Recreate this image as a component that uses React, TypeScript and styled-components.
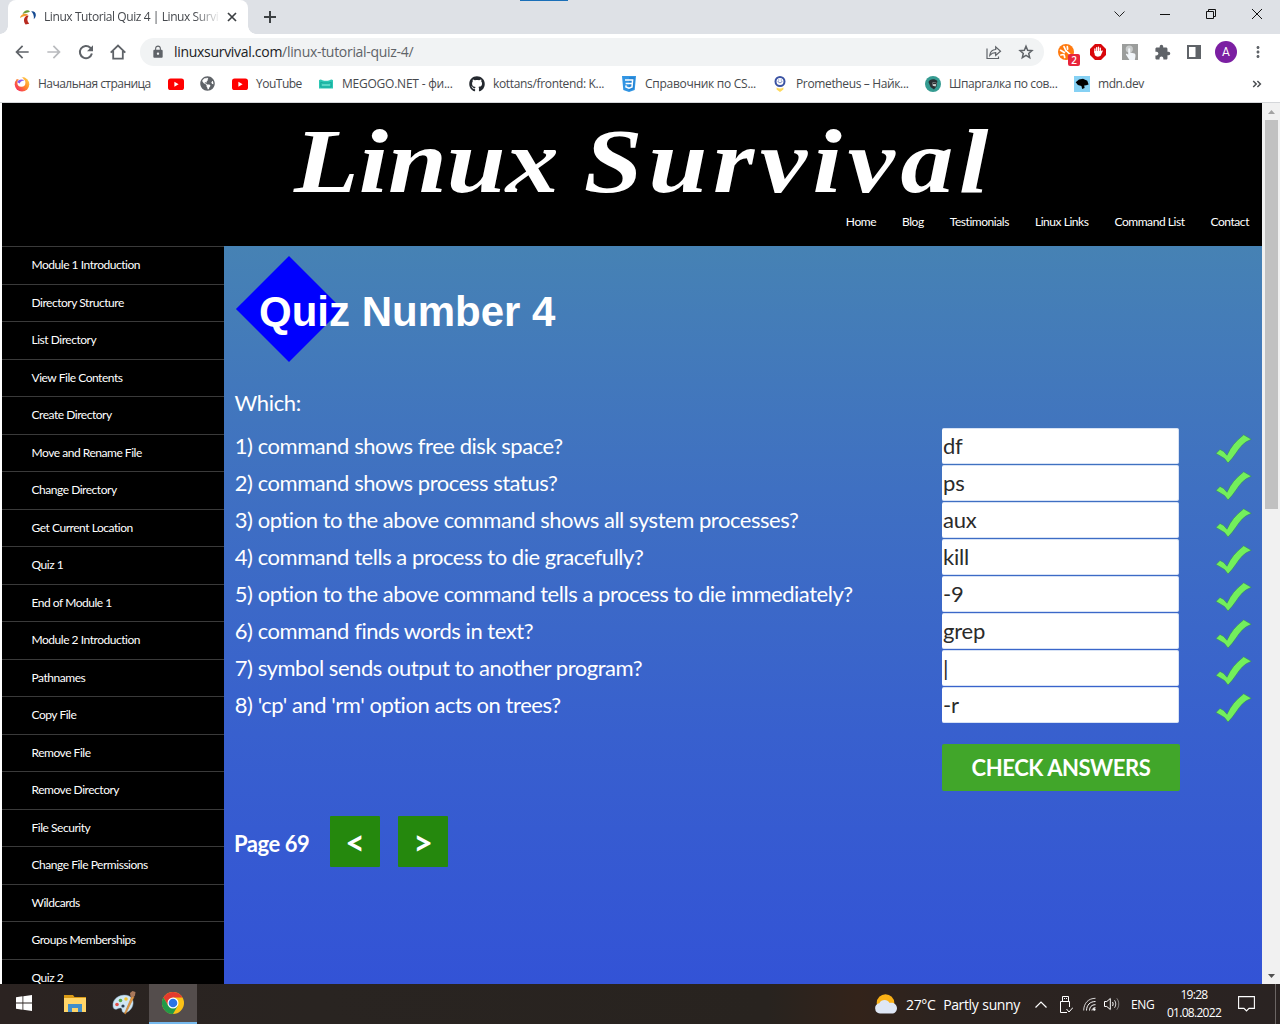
import React from "react";
import styled, { createGlobalStyle } from "styled-components";
import {
  MdArrowBack,
  MdArrowForward,
  MdLock,
  MdExtension,
  MdMoreVert,
} from "react-icons/md";
import { FaGithub, FaGlobeAmericas } from "react-icons/fa";

const UI = `"Open Sans", "Noto Sans", sans-serif`;
const LATO = `Lato, sans-serif`;

const Global = createGlobalStyle`
  *, *::before, *::after { box-sizing: border-box; }
  html, body { margin: 0; padding: 0; overflow: hidden; }
  svg { display: block; flex: none; }
`;

const Screen = styled.div`
  width: 1280px;
  height: 1024px;
  display: flex;
  flex-direction: column;
  overflow: hidden;
  background: #fff;
  font-family: ${UI};
`;

/* ---------- browser frame ---------- */

const TabStrip = styled.div`
  position: relative;
  height: 34px;
  flex: none;
  display: flex;
  align-items: flex-start;
  background: #dee1e6;
  padding-left: 8px;
`;

const TopMarker = styled.div`
  position: absolute;
  left: 520px;
  top: 0;
  width: 48px;
  height: 1px;
  background: #1a6fb8;
`;

const Tab = styled.div`
  position: relative;
  width: 240px;
  height: 34px;
  display: flex;
  align-items: center;
  padding: 0 10px 0 12px;
  background: #fff;
  border-radius: 8px 8px 0 0;
  &::before,
  &::after {
    content: "";
    position: absolute;
    bottom: 0;
    width: 8px;
    height: 8px;
  }
  &::before {
    left: -8px;
    background: radial-gradient(circle at 0 0, transparent 7.5px, #fff 8px);
  }
  &::after {
    right: -8px;
    background: radial-gradient(circle at 100% 0, transparent 7.5px, #fff 8px);
  }
`;

const TabTitle = styled.div`
  width: 175px;
  margin-left: 8px;
  white-space: nowrap;
  font-size: 12px;
  line-height: 16px;
  letter-spacing: -0.42px;
  color: #45484d;
  mask-image: linear-gradient(to right, #000 150px, transparent 177px);
`;

const TabClose = styled.div`
  margin-left: 8px;
`;

const NewTab = styled.div`
  margin: 11px 0 0 16px;
`;

const WindowButtons = styled.div`
  margin-left: auto;
  height: 28px;
  display: flex;
  align-items: center;
  > * {
    width: 46px;
    display: flex;
    justify-content: center;
  }
`;

const Toolbar = styled.div`
  height: 36px;
  flex: none;
  display: flex;
  align-items: center;
  padding-left: 12px;
  color: #5f6368;
`;

const NavButtons = styled.div`
  display: flex;
  align-items: center;
  gap: 12px;
  width: 128px;
`;

const HomeIcon = styled.svg`
  margin-left: 2px;
`;

const Omnibox = styled.div`
  width: 904px;
  height: 28px;
  border-radius: 14px;
  background: #f1f3f4;
  display: flex;
  align-items: center;
  padding: 0 9px 0 11px;
`;

const Url = styled.div`
  flex: 1;
  margin-left: 9px;
  font-size: 14px;
  line-height: 20px;
  letter-spacing: -0.3px;
  color: #5f6368;
  b {
    font-weight: 400;
    color: #202124;
  }
`;

const OmniActions = styled.div`
  display: flex;
  gap: 15px;
  align-items: center;
`;

const Extensions = styled.div`
  flex: 1;
  display: flex;
  align-items: center;
  padding-left: 14px;
`;

const ExtSlot = styled.div<{ $w: number }>`
  position: relative;
  width: ${(p) => p.$w}px;
  flex: none;
`;

const CountBadge = styled.div`
  position: absolute;
  left: 10px;
  top: 10px;
  width: 12px;
  height: 12px;
  border-radius: 2px;
  background: #e8253c;
  color: #fff;
  font: 600 10px/12px ${UI};
  text-align: center;
`;

const Avatar = styled.div`
  width: 22px;
  height: 22px;
  margin-right: 12px;
  border-radius: 50%;
  background: #7b1fa2;
  color: #fff;
  font: 400 12px/22px Roboto, sans-serif;
  text-align: center;
`;

const BookmarksBar = styled.div`
  height: 33px;
  flex: none;
  display: flex;
  align-items: center;
  padding: 0 0 5px 14px;
  border-bottom: 1px solid #d5d7da;
`;

const Bookmark = styled.div<{ $w: number }>`
  width: ${(p) => p.$w}px;
  flex: none;
  display: flex;
  align-items: center;
  gap: 8px;
`;

const BookmarkLabel = styled.span<{ $ls: number }>`
  font-size: 12px;
  line-height: 16px;
  white-space: nowrap;
  letter-spacing: ${(p) => p.$ls}px;
  color: #46494d;
`;

/* ---------- page ---------- */

const Viewport = styled.div`
  height: 881px;
  flex: none;
  display: flex;
  padding-left: 2px;
  overflow: hidden;
`;

const Page = styled.div`
  width: 1260px;
  flex: none;
  display: flex;
  flex-direction: column;
  background: #000;
`;

const Header = styled.header`
  height: 143px;
  flex: none;
  display: flex;
  flex-direction: column;
  color: #fff;
`;

const SiteTitle = styled.div`
  display: flex;
  width: 700px;
  height: 105px;
  margin-left: 292px;
  padding-top: 12px;
  white-space: nowrap;
  font: italic 700 92px/92px "Liberation Serif", serif;
  transform: scaleX(1.15);
  transform-origin: 0 0;
`;

const TitleWord = styled.span<{ $w: number; $ls: number }>`
  width: ${(p) => p.$w}px;
  letter-spacing: ${(p) => p.$ls}px;
`;

const TopNav = styled.nav`
  align-self: stretch;
  display: flex;
  justify-content: flex-end;
  gap: 26px;
  padding: 6px 13px 0 0;
  font: 400 12px/16px ${LATO};
  letter-spacing: -0.45px;
`;

const Body = styled.div`
  flex: 1;
  display: flex;
  min-height: 0;
`;

const Sidebar = styled.aside`
  width: 222px;
  flex: none;
  overflow: hidden;
`;

const SideItem = styled.div`
  height: 37.5px;
  border-top: 1px solid #3a3a3a;
  padding-left: 29.5px;
  color: #fff;
  font: 400 12px/36px ${LATO};
  letter-spacing: -0.47px;
`;

const Content = styled.main`
  flex: 1;
  padding: 0 0 0 10px;
  background: linear-gradient(#4682b4, #3f70c2 33%, #3860ce 66%, #3353d6);
  color: #fff;
  font: 400 22px/36px ${LATO};
`;

const QuizHeading = styled.h1`
  position: relative;
  height: 139px;
  margin: 0;
  padding: 42px 0 0 25px;
  font: 700 42px/48px "Liberation Sans", Arial, sans-serif;
  span {
    position: relative;
  }
`;

const Diamond = styled.div`
  position: absolute;
  left: 17.5px;
  top: 25.5px;
  width: 75px;
  height: 75px;
  background: #0000fe;
  transform: translate(-0.5px, -0.5px) rotate(45deg);
`;

const Lead = styled.p`
  margin: 0;
  height: 43px;
  padding-left: 0.5px;
  letter-spacing: -0.35px;
`;

const QuizRow = styled.div`
  display: grid;
  grid-template-columns: 708px 237px 36px 37px;
  height: 37px;
`;

const Question = styled.span`
  padding-left: 0.8px;
  letter-spacing: -0.46px;
`;

const Answer = styled.div`
  height: 36px;
  padding-left: 1px;
  background: #fff;
  border: 1px solid #d7e2f5;
  border-left: 0;
  border-radius: 2px;
  line-height: 34px;
  letter-spacing: -0.2px;
  color: #2b2b2b;
`;

const Mark = styled.div`
  grid-column: 4;
  padding-top: 5px;
`;

const CheckButton = styled.div`
  width: 238px;
  height: 47px;
  margin: 20px 0 0 708px;
  background: #41a62a;
  border-radius: 2px;
  text-align: center;
  font-weight: 700;
  line-height: 47px;
  letter-spacing: -0.42px;
`;

const Pager = styled.div`
  display: flex;
  align-items: center;
  margin-top: 25px;
  height: 51px;
  font-weight: 700;
`;

const PageLabel = styled.div`
  width: 96px;
  padding-top: 4px;
  letter-spacing: -0.45px;
`;

const PageButton = styled.div`
  width: 50px;
  height: 51px;
  margin-right: 18px;
  background: #25880d;
  border-radius: 1px;
  text-align: center;
  font-size: 34px;
  line-height: 51px;
`;

const Scrollbar = styled.div`
  width: 18px;
  flex: none;
  display: flex;
  flex-direction: column;
  align-items: center;
  padding-left: 1px;
  background: #f1f1f1;
`;

const ScrollArrow = styled.div`
  height: 17px;
  padding-top: 7px;
`;

const Thumb = styled.div`
  width: 13px;
  height: 389px;
  margin-bottom: auto;
  background: #c1c1c1;
`;

/* ---------- taskbar ---------- */

const Taskbar = styled.div`
  height: 40px;
  flex: none;
  display: flex;
  background: linear-gradient(to right, #2b2321, #292421 25%, #28231f 60%, #33231a 67%, #2b2320 74%, #2a2322);
  color: #fff;
`;

const TaskButton = styled.div<{ $w: number; $active?: boolean }>`
  width: ${(p) => p.$w}px;
  display: flex;
  align-items: center;
  justify-content: center;
  background: ${(p) => (p.$active ? "#544d4c" : "transparent")};
  border-bottom: 2px solid ${(p) => (p.$active ? "#76b9ed" : "transparent")};
`;

const Tray = styled.div`
  margin-left: auto;
  display: flex;
  align-items: center;
  width: 405px;
`;

const Cell = styled.div<{ $w: number }>`
  width: ${(p) => p.$w}px;
  flex: none;
  white-space: nowrap;
`;

const Weather = styled.div`
  width: 129px;
  flex: none;
  padding-top: 2px;
  font-size: 14px;
  line-height: 20px;
  white-space: pre;
  letter-spacing: -0.36px;
  word-spacing: 0.6px;
`;

const Lang = styled.div`
  width: 33px;
  flex: none;
  font-size: 12px;
  letter-spacing: -0.4px;
`;

const Clock = styled.div`
  width: 60px;
  flex: none;
  font-size: 12px;
  line-height: 18px;
  letter-spacing: -0.7px;
  text-align: center;
`;

const NotificationIcon = styled.svg`
  margin-left: 14px;
`;

const ShowDesktop = styled.div`
  width: 5px;
  height: 40px;
  margin-left: auto;
  border-left: 1px solid #6b6564;
`;

const YouTube = () => (
  <svg width="16" height="16" viewBox="0 0 16 16">
    <rect y="2.5" width="16" height="11.5" rx="2.6" fill="#f00" />
    <path d="M6.4 5.8v5l4.2-2.5z" fill="#fff" />
  </svg>
);

const Firefox = () => (
  <svg width="16" height="16" viewBox="0 0 16 16">
    <defs>
      <linearGradient id="ff" x1="1" y1="0" x2="0" y2="1">
        <stop offset="0" stopColor="#ffe14d" />
        <stop offset=".45" stopColor="#ff8a2a" />
        <stop offset="1" stopColor="#f5156c" />
      </linearGradient>
    </defs>
    <circle cx="8" cy="8.3" r="7.3" fill="url(#ff)" />
    <path d="M2.5 3C4 .6 8 .4 9.5 2.4L7 4z" fill="#fff" />
    <circle cx="7.4" cy="6.8" r="4" fill="#fff" />
    <path d="M3.2 6.3C4 3.5 8 2.6 10.4 4.6 8 4.6 6.5 5.6 5.8 7.4z" fill="#8a5cf0" />
  </svg>
);

const Megogo = () => (
  <svg width="16" height="16" viewBox="0 0 16 16">
    <path d="M1 4.2Q2.5 2.6 4.4 4.2 8 5.4 11.6 4.2 13.5 2.6 15 4.2V12.6H1z" fill="#2cc7b4" />
    <path d="M2.8 6.2l2.4.8h5.6l2.4-.8v4.8H2.8z" fill="none" stroke="#12a597" strokeWidth=".9" />
    <path d="M4 9h8" stroke="#8ae8da" />
  </svg>
);

const Css = () => (
  <svg width="16" height="16" viewBox="0 0 16 16">
    <path d="M1 0h14l-1.3 14L8 16l-5.7-2z" fill="#3295e3" />
    <path d="M8 1.2h5.7l-1 11.7L8 14.4z" fill="#2483d3" />
    <path d="M4 4h7.6l-.6 7L8 12.1 5 11l-.1-1.6M4.6 7.6h6.5" fill="none" stroke="#fff" strokeWidth="1.5" />
  </svg>
);

const Prometheus = () => (
  <svg width="16" height="16" viewBox="0 0 16 16">
    <circle cx="8" cy="5.5" r="4.5" fill="#fff" stroke="#3b53a3" strokeWidth="2" />
    <path d="M5.8 5.2c1 2 3.4 2 4.4 0M6.2 4h1M8.8 4h1" stroke="#3b53a3" strokeWidth=".8" fill="none" />
    <path d="M4.6 11.6c2 1.2 4.8 1.2 6.8 0v2L8 16l-3.4-2.4z" fill="#ffd95c" />
  </svg>
);

const Sheet = () => (
  <svg width="16" height="16" viewBox="0 0 16 16">
    <circle cx="8" cy="8" r="8" fill="#359b91" />
    <path d="M3.5 6C4 2.8 10 2 12.4 5l-1 5.5L9 13.5 5.5 11z" fill="#292f33" />
    <path d="M7.5 6.4l4 .4-.8 3.6-3-.6z" fill="#c9d0d0" />
    <path d="M7.8 7.6h3.4" stroke="#222" />
  </svg>
);

const Mdn = () => (
  <svg width="16" height="16" viewBox="0 0 16 16">
    <path fill="#86d1f4" d="M0 0h16v16H0z" />
    <path d="M1.7 6.3L5 3.4l4-.6 4.3 2 1.3 3.7-2.4.8-2 .3.4 2.3-2.4 1.2-.8-3-3.5-1z" fill="#000" />
  </svg>
);

const PalmFavicon = () => (
  <svg width="16" height="16" viewBox="0 0 16 16">
    <path d="M2.5 5C4 1.3 8 .2 10 2.4 8.5 4 5.5 3.4 2.5 5z" fill="#6d9c3a" />
    <path d="M0 9.2C.4 5.5 4.5 3.7 8 5.5 6 8 2.5 6.6 0 9.2z" fill="#f29a2e" />
    <path d="M7 6.6C3.6 8.5 3 12.4 5.6 15.6l3.6-.9C6.9 12.2 6.7 9.4 8.6 6.8z" fill="#b82a20" />
    <path d="M11.3 2.4c4.6-.6 6.2 4.4 2.4 7.8.6-2.8-.2-5.6-2.4-7.8z" fill="#164a91" />
  </svg>
);

const CheckMark = () => (
  <svg width="37" height="31" viewBox="0 0 37 31">
    <path
      d="M1 20.5L5 16.4 8.7 18.5 12 22.3Q14.8 16 18.5 11.5T28.7 1.8L36.3 6.3Q30.5 8.6 27.3 12T20.7 20.6 13 30L9.5 25.6 4 22.2z"
      fill="#73ef5c"
      stroke="#348a5c"
      strokeWidth=".6"
    />
  </svg>
);

const bookmarks: { w: number; icon: React.ReactNode; text?: string; ls?: number }[] = [
  { w: 154, icon: <Firefox />, text: "Начальная страница", ls: -0.53 },
  { w: 32, icon: <YouTube /> },
  { w: 32, icon: <FaGlobeAmericas size={15} color="#5f6368" /> },
  { w: 86, icon: <YouTube />, text: "YouTube", ls: -0.5 },
  { w: 151, icon: <Megogo />, text: "MEGOGO.NET - фи...", ls: -0.23 },
  { w: 152, icon: <FaGithub size={16} color="#24292f" />, text: "kottans/frontend: K...", ls: -0.34 },
  { w: 151, icon: <Css />, text: "Справочник по CS...", ls: -0.28 },
  { w: 153, icon: <Prometheus />, text: "Prometheus – Найк...", ls: -0.36 },
  { w: 149, icon: <Sheet />, text: "Шпаргалка по сов...", ls: -0.38 },
  { w: 176, icon: <Mdn />, text: "mdn.dev", ls: -0.48 },
];

const lessons = [
  "Module 1 Introduction", "Directory Structure", "List Directory", "View File Contents",
  "Create Directory", "Move and Rename File", "Change Directory", "Get Current Location",
  "Quiz 1", "End of Module 1", "Module 2 Introduction", "Pathnames", "Copy File",
  "Remove File", "Remove Directory", "File Security", "Change File Permissions",
  "Wildcards", "Groups Memberships", "Quiz 2",
];

const questions: [string, string][] = [
  ["1) command shows free disk space?", "df"],
  ["2) command shows process status?", "ps"],
  ["3) option to the above command shows all system processes?", "aux"],
  ["4) command tells a process to die gracefully?", "kill"],
  ["5) option to the above command tells a process to die immediately?", "-9"],
  ["6) command finds words in text?", "grep"],
  ["7) symbol sends output to another program?", "|"],
  ["8) 'cp' and 'rm' option acts on trees?", "-r"],
];

function BrowserFrame() {
  return (
    <>
      <TabStrip>
        <TopMarker />
        <Tab>
          <PalmFavicon />
          <TabTitle>Linux Tutorial Quiz 4 | Linux Survi</TabTitle>
          <TabClose>
            <svg width="10" height="10" viewBox="0 0 10 10" stroke="#3c4043" strokeWidth="1.7">
              <path d="M1 1l8 8M9 1l-8 8" />
            </svg>
          </TabClose>
        </Tab>
        <NewTab>
          <svg width="12" height="12" viewBox="0 0 12 12" stroke="#3c4043" strokeWidth="2">
            <path d="M6 0v12M0 6h12" />
          </svg>
        </NewTab>
        <WindowButtons>
          <div>
            <svg width="11" height="10" viewBox="0 0 11 10" fill="none" stroke="#222">
              <path d="M.5 2.5l5 5 5-5" />
            </svg>
          </div>
          <div>
            <svg width="10" height="10" viewBox="0 0 10 10" stroke="#111">
              <path d="M0 5.5h10" />
            </svg>
          </div>
          <div>
            <svg width="10" height="10" viewBox="0 0 10 10" fill="none" stroke="#111">
              <path d="M.5 2.5h7v7h-7zM2.5 2.5v-2h7v7h-2" />
            </svg>
          </div>
          <div>
            <svg width="10" height="10" viewBox="0 0 10 10" stroke="#111">
              <path d="M0 0l10 10M10 0L0 10" />
            </svg>
          </div>
        </WindowButtons>
      </TabStrip>
      <Toolbar>
        <NavButtons>
          <MdArrowBack size={20} />
          <MdArrowForward size={20} color="#b9bbbe" />
          <svg width="20" height="20" viewBox="0 0 20 20">
            <path d="M15.9 11.6A6.1 6.1 0 1 1 14.3 5.7L15.8 7.2" fill="none" stroke="#5f6368" strokeWidth="2" />
            <path d="M17 3.2v6h-6z" fill="#5f6368" />
          </svg>
          <HomeIcon width="16" height="16" viewBox="0 0 16 16" fill="none" stroke="#5f6368" strokeWidth="1.8">
            <path d="M.7 8.6L8 1.5l7.3 7.1M3.2 7v7.6h9.6V7" />
          </HomeIcon>
        </NavButtons>
        <Omnibox>
          <MdLock size={14} />
          <Url>
            <b>linuxsurvival.com</b>/linux-tutorial-quiz-4/
          </Url>
          <OmniActions>
            <svg width="16" height="16" viewBox="0 0 16 16" fill="none" stroke="#5f6368" strokeWidth="1.2">
              <path d="M1 4.5v10h11.5v-2M3.8 11.3c.4-3.7 2.4-5.6 5.9-5.8V2.8l4.8 4.4-4.8 4.2V8.7c-2.6 0-4.4.8-5.9 2.6z" />
            </svg>
            <svg width="18" height="18" viewBox="0 0 24 24" fill="none" stroke="#5f6368" strokeWidth="2">
              <path d="M12 4.4l2.2 5.3 5.7.5-4.3 3.7 1.3 5.6-4.9-3-4.9 3 1.3-5.6-4.3-3.7 5.7-.5z" />
            </svg>
          </OmniActions>
        </Omnibox>
        <Extensions>
          <ExtSlot $w={32}>
            <svg width="16" height="16" viewBox="0 0 16 16">
              <circle cx="8" cy="8" r="8" fill="#ff7a0f" />
              <path d="M6 2.6l2 4.4M2.6 6.3L6.4 8.6M2.9 11l2.5-.5M8.5 7L14 12.3M9.3 2.5l.3 2.6M6.7 13.5l-.5-2.4" stroke="#fff" strokeWidth="1.7" strokeLinecap="round" />
            </svg>
            <CountBadge>2</CountBadge>
          </ExtSlot>
          <ExtSlot $w={32}>
            <svg width="16" height="16" viewBox="0 0 16 16">
              <path d="M5 0h6l5 5v6l-5 5H5l-5-5V5z" fill="#d9070b" />
              <path d="M4.9 8.5V5M6.7 7.5V3.6M8.5 7.5V3.2M10.3 8V4.2" stroke="#fff" strokeWidth="1.3" strokeLinecap="round" />
              <path d="M4.3 7h6.7l1.3-.8.5.7-2 4.6c-.9 1.5-4.8 1.7-6-.2z" fill="#fff" />
            </svg>
          </ExtSlot>
          <ExtSlot $w={32}>
            <svg width="16" height="16" viewBox="0 0 16 16">
              <path fill="#9b9d9c" d="M0 0h16v16H0z" />
              <circle cx="7.3" cy="5" r="3.6" fill="#c9cccc" />
              <path d="M6.2 5.3c0-1.4 2-1.4 2 0v3.2l4.3 1c1.4.3 1.2 3 .3 6.5H7.4L4 10.8c-.5-1 1-1.7 2.2 0z" fill="#f2f6fa" />
            </svg>
          </ExtSlot>
          <ExtSlot $w={33}>
            <MdExtension size={17} />
          </ExtSlot>
          <ExtSlot $w={28}>
            <svg width="14" height="14" viewBox="0 0 14 14">
              <path d="M1 1h12v12H1z" fill="#fff" stroke="#5f6368" strokeWidth="2" />
              <path d="M8.5 1H14v12H8.5z" fill="#5f6368" />
            </svg>
          </ExtSlot>
          <Avatar>A</Avatar>
          <MdMoreVert size={18} />
        </Extensions>
      </Toolbar>
      <BookmarksBar>
        {bookmarks.map((b, i) => (
          <Bookmark key={i} $w={b.w}>
            {b.icon}
            {b.text && <BookmarkLabel $ls={b.ls ?? 0}>{b.text}</BookmarkLabel>}
          </Bookmark>
        ))}
        <svg width="14" height="8" viewBox="-2 0 14 8" fill="none" stroke="#4b4e52" strokeWidth="1.5">
          <path d="M1.2 1l3 3-3 3M5.4 1l3 3-3 3" />
        </svg>
      </BookmarksBar>
    </>
  );
}

function QuizPage() {
  return (
    <Viewport>
      <Page>
        <Header>
          <SiteTitle>
            <TitleWord $w={252} $ls={0}>Linux</TitleWord>
            <TitleWord $w={355} $ls={5}>Survival</TitleWord>
          </SiteTitle>
          <TopNav>
            {["Home", "Blog", "Testimonials", "Linux Links", "Command List", "Contact"].map((t) => (
              <span key={t}>{t}</span>
            ))}
          </TopNav>
        </Header>
        <Body>
          <Sidebar>
            {lessons.map((l) => (
              <SideItem key={l}>{l}</SideItem>
            ))}
          </Sidebar>
          <Content>
            <QuizHeading>
              <Diamond />
              <span>Quiz Number 4</span>
            </QuizHeading>
            <Lead>Which:</Lead>
            {questions.map(([q, a]) => (
              <QuizRow key={q}>
                <Question>{q}</Question>
                <Answer>{a}</Answer>
                <Mark>
                  <CheckMark />
                </Mark>
              </QuizRow>
            ))}
            <CheckButton>CHECK ANSWERS</CheckButton>
            <Pager>
              <PageLabel>Page 69</PageLabel>
              <PageButton>&lt;</PageButton>
              <PageButton>&gt;</PageButton>
            </Pager>
          </Content>
        </Body>
      </Page>
      <Scrollbar>
        <ScrollArrow>
          <svg width="7" height="4" viewBox="0 0 7 4">
            <path d="M0 4l3.5-4L7 4z" fill="#a3a3a3" />
          </svg>
        </ScrollArrow>
        <Thumb />
        <ScrollArrow>
          <svg width="7" height="4" viewBox="0 0 7 4">
            <path d="M0 0l3.5 4L7 0z" fill="#505050" />
          </svg>
        </ScrollArrow>
      </Scrollbar>
    </Viewport>
  );
}

function WindowsTaskbar() {
  return (
    <Taskbar>
      <TaskButton $w={48}>
        <svg width="16" height="16" viewBox="0 0 16 16" fill="#fff">
          <path d="M0 2.2L6.5 1.3v6.3H0zM7.3 1.2L16 0v7.6H7.3zM0 8.4h6.5v6.3L0 13.8zM7.3 8.4H16V16l-8.7-1.2z" />
        </svg>
      </TaskButton>
      <TaskButton $w={53}>
        <svg width="22" height="19" viewBox="0 0 22 19">
          <path d="M0 1h9l1.5 2H22v4H0z" fill="#d99a16" />
          <path d="M0 4h22v14H0z" fill="#ffd569" />
          <path d="M4 18v-8h14v8h-4v-4H8v4z" fill="#3f8ecb" />
        </svg>
      </TaskButton>
      <TaskButton $w={48}>
        <svg width="26" height="24" viewBox="0 0 26 24">
          <path d="M1 15C0 7 10 2 17 5c6 3 5 11 0 15-4 3-7 2-7-1s-3-2-5-1-4-.5-4-3z" fill="#cfe6f4" stroke="#8eb6d0" strokeWidth=".5" />
          <circle cx="5" cy="13.5" r="1.8" fill="#e2504a" />
          <circle cx="8.5" cy="9.5" r="1.8" fill="#58a844" />
          <circle cx="14" cy="8" r="1.8" fill="#f1c232" />
          <circle cx="11" cy="15" r="1.6" fill="#2b3e52" />
          <path d="M20 5L12.5 22.5l1 .5L22 6z" fill="#e39a45" stroke="#c27a2a" strokeWidth=".6" />
          <path d="M18.5 5.5L18 2l2.5-2 3 1-.5 3.5-1.5 2z" fill="#a9785a" />
        </svg>
      </TaskButton>
      <TaskButton $w={48} $active>
        <svg width="22" height="22" viewBox="0 0 22 22">
          <circle cx="11" cy="11" r="11" fill="#fbc116" />
          <path d="M1.47 5.5A11 11 0 0 1 20.53 5.5H11L6.24 13.75z" fill="#e33b2e" />
          <path d="M1.47 5.5A11 11 0 0 0 11 22l4.76-8.25H6.24z" fill="#229a48" />
          <circle cx="11" cy="11" r="5.5" fill="#fff" />
          <circle cx="11" cy="11" r="4.3" fill="#2a73e8" />
        </svg>
      </TaskButton>
      <Tray>
        <Cell $w={31}>
          <svg width="24" height="20" viewBox="0.5 0 24 20">
            <circle cx="11" cy="9" r="8.8" fill="#fbb116" />
            <path d="M5.5 19.5a5.2 5.2 0 0 1-.6-10.3C6.5 5.2 13 4.6 15.2 9c3-1 7.3 1 7.3 5.2 0 3-2.3 5.3-5 5.3z" fill="#dfe7f5" />
          </svg>
        </Cell>
        <Weather>{"27°C  Partly sunny"}</Weather>
        <Cell $w={24}>
          <svg width="12" height="7" viewBox="0 0 12 7" fill="none" stroke="#fff" strokeWidth="1.2">
            <path d="M.5 6.5L6 1l5.5 5.5" />
          </svg>
        </Cell>
        <Cell $w={24}>
          <svg width="14" height="17" viewBox="0 0 14 17" fill="none" stroke="#fff">
            <path d="M3.5 5.5v-5h6v5M8 16.5H1.5v-11h9V11M5 2.5h1M7 2.5h1M7.5 13l2.5 3 4-4.5" />
          </svg>
        </Cell>
        <Cell $w={21}>
          <svg width="13" height="14" viewBox="0 0 13 14" fill="none" stroke="#fff">
            <path d="M.7 13.5C.8 6 5.5 1.3 12.5 1.3" opacity=".8" />
            <path d="M3.5 13.5c.2-5.5 3.5-9 9-9M6.5 13.5c.2-3.5 2-5.8 6-5.8M9 13.5c.2-1.6 1.2-2.8 3.5-2.8" />
            <circle cx="11.3" cy="12.5" r="1.2" fill="#fff" stroke="none" />
          </svg>
        </Cell>
        <Cell $w={27}>
          <svg width="16" height="14" viewBox="0 0 16 14" fill="none" stroke="#fff">
            <path d="M.5 4.5h2.3l3.5-3v11l-3.5-3H.5zM8.5 5c.8 1.2.8 2.8 0 4" />
            <path d="M10.5 3.2c1.7 2.2 1.7 5.4 0 7.6" opacity=".8" />
            <path d="M12.8 1.3c2.6 3.3 2.6 8 0 11.4" opacity=".45" />
          </svg>
        </Cell>
        <Lang>ENG</Lang>
        <Clock>
          <div>19:28</div>
          <div>01.08.2022</div>
        </Clock>
        <NotificationIcon width="17" height="16" viewBox="0 0 17 16" fill="none" stroke="#fff" strokeWidth="1.1">
          <path d="M.6.6h15.8v11.8H11L8.5 15 6 12.4H.6z" />
        </NotificationIcon>
        <ShowDesktop />
      </Tray>
    </Taskbar>
  );
}

export default function App() {
  return (
    <Screen>
      <Global />
      <BrowserFrame />
      <QuizPage />
      <WindowsTaskbar />
    </Screen>
  );
}
